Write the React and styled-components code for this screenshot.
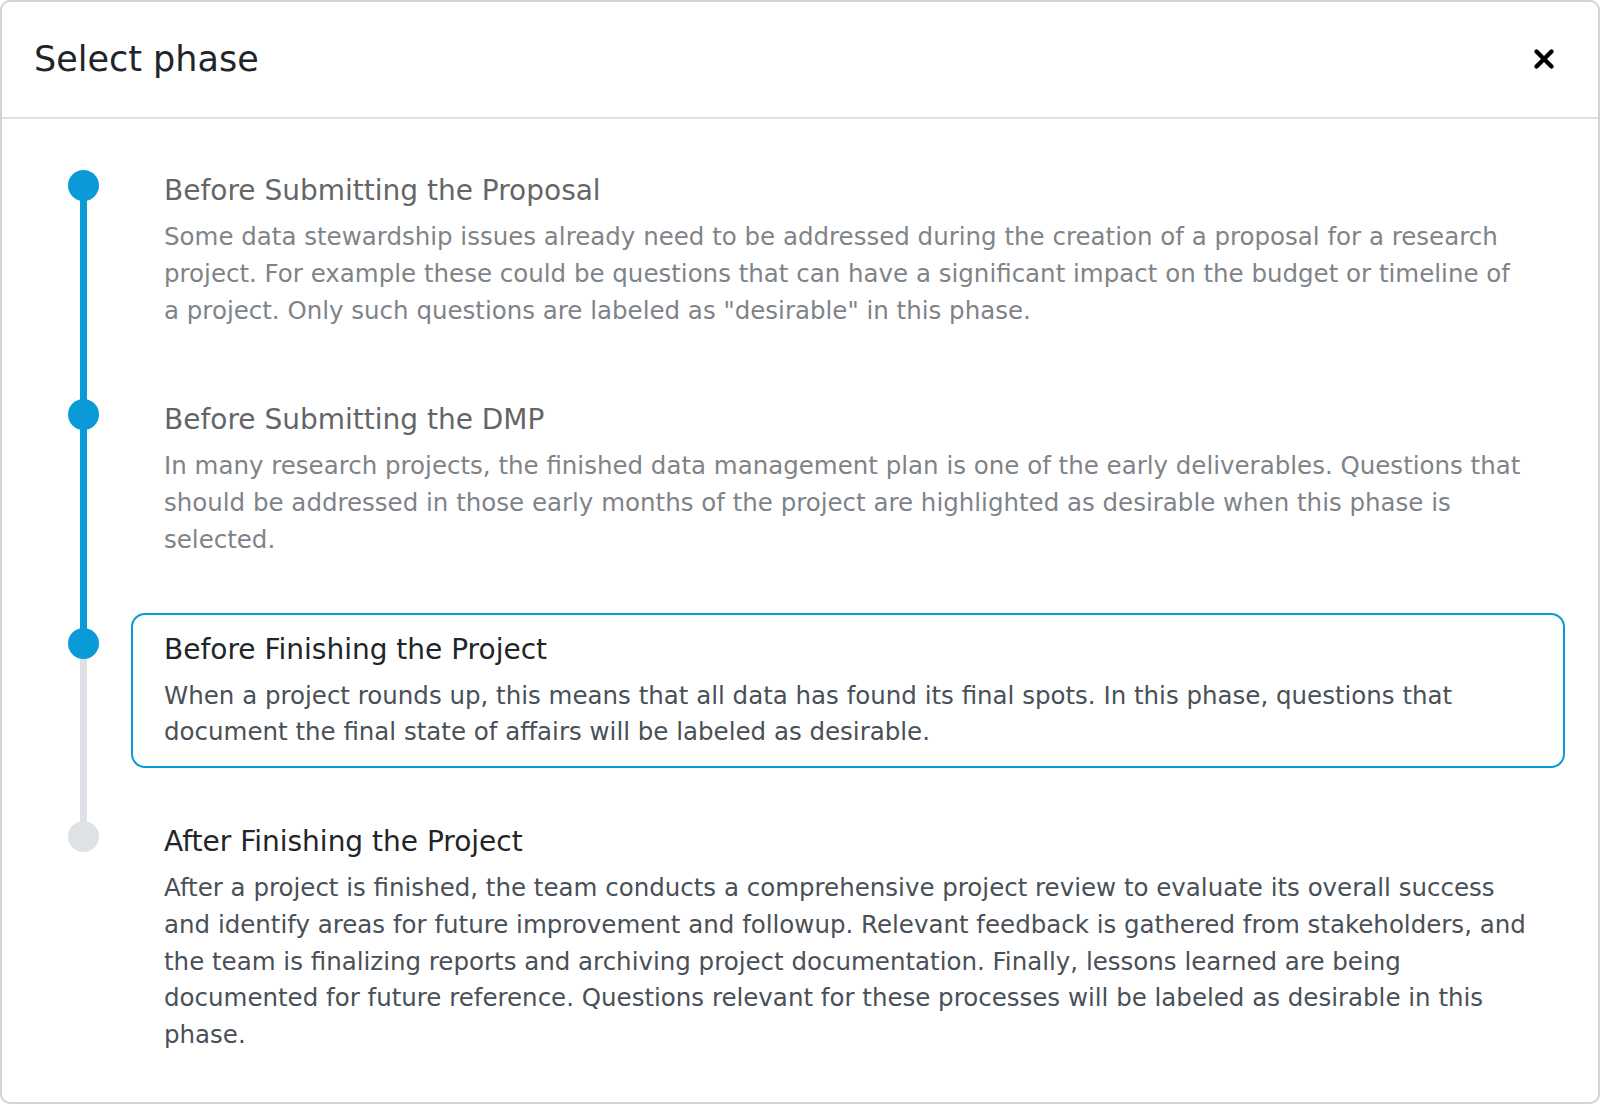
import React from 'react';
import styled, { createGlobalStyle } from 'styled-components';

const BLUE = '#0a9ad7';
const GRAY = '#dee2e6';
const GAP = 37;
const DOT_CENTER = 31;

const GlobalStyle = createGlobalStyle`
  html, body {
    margin: 0;
    padding: 0;
    background: #fff;
  }
  body {
    font-family: "DejaVu Sans", "Liberation Sans", sans-serif;
    color: #212529;
  }
  * {
    box-sizing: border-box;
  }
`;

const phases = [
  {
    title: 'Before Submitting the Proposal',
    description:
      'Some data stewardship issues already need to be addressed during the creation of a proposal for a research project. For example these could be questions that can have a significant impact on the budget or timeline of a project. Only such questions are labeled as "desirable" in this phase.',
  },
  {
    title: 'Before Submitting the DMP',
    description:
      'In many research projects, the finished data management plan is one of the early deliverables. Questions that should be addressed in those early months of the project are highlighted as desirable when this phase is selected.',
  },
  {
    title: 'Before Finishing the Project',
    description:
      'When a project rounds up, this means that all data has found its final spots. In this phase, questions that document the final state of affairs will be labeled as desirable.',
  },
  {
    title: 'After Finishing the Project',
    description:
      'After a project is finished, the team conducts a comprehensive project review to evaluate its overall success and identify areas for future improvement and followup. Relevant feedback is gathered from stakeholders, and the team is finalizing reports and archiving project documentation. Finally, lessons learned are being documented for future reference. Questions relevant for these processes will be labeled as desirable in this phase.',
  },
];

const App = () => {
  const selected = 2;

  return (
    <>
      <GlobalStyle />
      <Dialog>
        <Header>
          <Title>Select phase</Title>
          <CloseButton aria-label="Close">
            <svg width="22" height="22" viewBox="0 0 22 22">
              <path
                d="M3.5 3.5 L18.5 18.5 M18.5 3.5 L3.5 18.5"
                stroke="#000"
                strokeWidth="4.4"
                strokeLinecap="round"
              />
            </svg>
          </CloseButton>
        </Header>
        <Body>
          {phases.map((phase, index) => (
            <PhaseRow key={phase.title} $last={index === phases.length - 1}>
              <Marker
                $reached={index <= selected}
                $line={index < phases.length - 1}
                $lineActive={index + 1 <= selected}
              />
              <PhaseBox $active={index === selected} $past={index < selected}>
                <PhaseTitle>{phase.title}</PhaseTitle>
                <PhaseText>{phase.description}</PhaseText>
              </PhaseBox>
            </PhaseRow>
          ))}
        </Body>
      </Dialog>
    </>
  );
};

export default App;

const Dialog = styled.div`
  width: 1600px;
  height: 1104px;
  border: 2px solid #d3d3d3;
  border-radius: 10px;
  background: #fff;
  display: flex;
  flex-direction: column;
  overflow: hidden;
`;

const Header = styled.div`
  height: 117px;
  flex-shrink: 0;
  display: flex;
  align-items: center;
  justify-content: space-between;
  padding: 0 40px 2px 32px;
  border-bottom: 2px solid ${GRAY};
`;

const Title = styled.h5`
  margin: 0;
  font-size: 35px;
  line-height: 1.2;
  font-weight: 400;
  color: #212529;
`;

const CloseButton = styled.button`
  border: 0;
  background: transparent;
  padding: 0;
  width: 28px;
  height: 28px;
  display: flex;
  align-items: center;
  justify-content: center;
  cursor: pointer;
`;

const Body = styled.div`
  padding: 35px 33px;
  display: flex;
  flex-direction: column;
`;

const PhaseRow = styled.div`
  display: flex;
  margin-bottom: ${p => (p.$last ? 0 : GAP)}px;
`;

const Marker = styled.div`
  position: relative;
  width: 96px;
  flex-shrink: 0;

  &::before {
    content: '';
    position: absolute;
    z-index: 2;
    left: 50%;
    top: ${DOT_CENTER - 15.5}px;
    width: 31px;
    height: 31px;
    margin-left: -15.5px;
    border-radius: 50%;
    background: ${p => (p.$reached ? BLUE : GRAY)};
  }

  &::after {
    content: '';
    display: ${p => (p.$line ? 'block' : 'none')};
    position: absolute;
    z-index: 1;
    left: 50%;
    width: 7px;
    margin-left: -3.5px;
    top: ${DOT_CENTER}px;
    bottom: -${GAP + DOT_CENTER}px;
    background: ${p => (p.$lineActive ? BLUE : GRAY)};
  }
`;

const PhaseBox = styled.div`
  flex: 1;
  border: 2px solid ${p => (p.$active ? BLUE : 'transparent')};
  border-radius: 14px;
  padding: 14px 34px 15px 31px;
  opacity: ${p => (p.$past ? 0.7 : 1)};
  cursor: pointer;
`;

const PhaseTitle = styled.div`
  font-size: 28px;
  line-height: 42px;
  color: #212529;
  margin-bottom: 7px;
`;

const PhaseText = styled.div`
  font-size: 24.5px;
  line-height: 1.5;
  color: #495057;
`;
